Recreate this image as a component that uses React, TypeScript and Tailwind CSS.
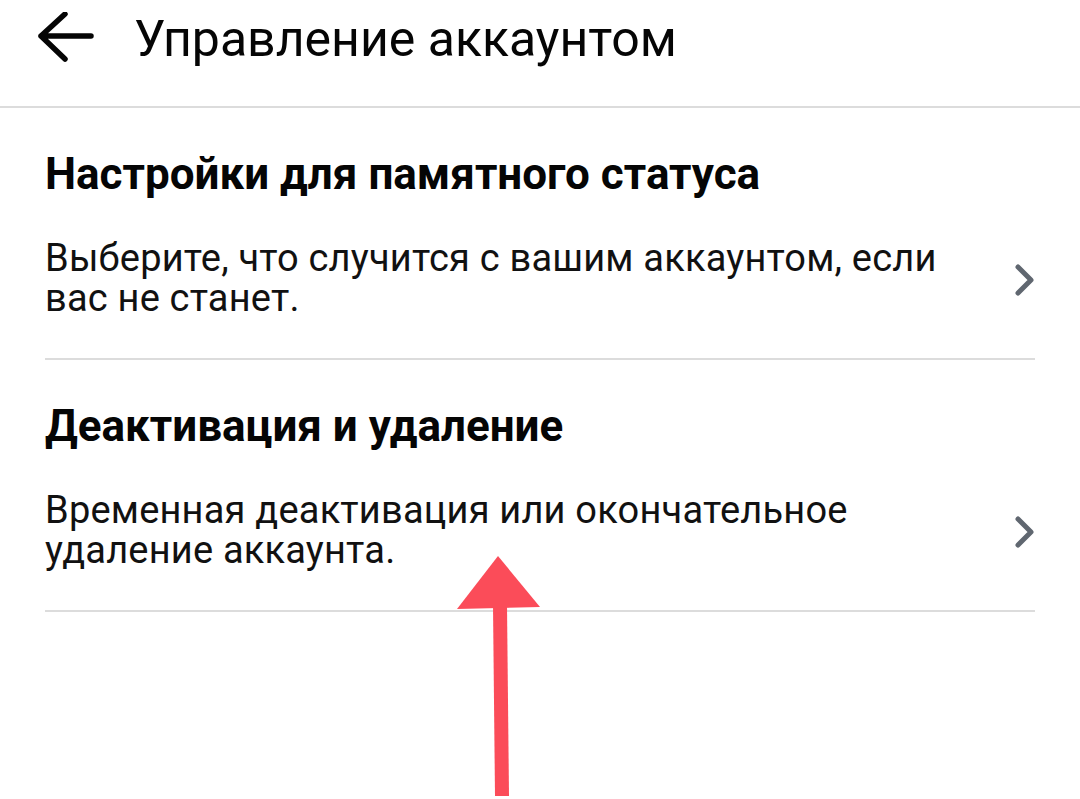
import React from "react";

type Item = {
  title: string;
  lines: string[];
};

const items: Item[] = [
  {
    title: "Настройки для памятного статуса",
    lines: ["Выберите, что случится с вашим аккаунтом, если", "вас не станет."],
  },
  {
    title: "Деактивация и удаление",
    lines: ["Временная деактивация или окончательное", "удаление аккаунта."],
  },
];

const BackArrow = () => (
  <svg width="60" height="54" viewBox="0 0 60 54" fill="none">
    <path
      d="M5 24 H55 M29 2 L5 24 L29 47"
      stroke="#050505"
      strokeWidth="5.5"
      strokeLinecap="round"
      strokeLinejoin="round"
    />
  </svg>
);

const Chevron = () => (
  <svg width="22" height="34" viewBox="0 0 22 34" fill="none">
    <path
      d="M4 4 L17 17 L4 30"
      stroke="#606770"
      strokeWidth="5"
      strokeLinecap="round"
      strokeLinejoin="round"
    />
  </svg>
);

// red pointer drawn over the list
const Pointer = () => (
  <svg
    className="absolute left-0 top-0 pointer-events-none"
    width="1080"
    height="799"
    viewBox="0 0 1080 799"
  >
    <polygon points="498,556 457,609 540,607" fill="#fb4c59" />
    <polygon points="493,605 507,605 509,796 495,796" fill="#fb4c59" />
  </svg>
);

const Row = ({ item }: { item: Item }) => (
  <div className="mx-[45px] border-b-2 border-[#dcdcdc] pt-[41px] pb-[40px]">
    <h2 className="text-[44px] leading-[50px] font-bold text-[#050505]">
      {item.title}
    </h2>
    <div className="mt-[39px] flex items-center justify-between">
      <p className="text-[38px] leading-[40px] tracking-[0.2px] text-[#111111]">
        {item.lines[0]}
        <br />
        {item.lines[1]}
      </p>
      <div className="mt-[4px] mr-[-1px]">
        <Chevron />
      </div>
    </div>
  </div>
);

export default function App() {
  return (
    <div
      className="relative w-[1080px] h-[799px] overflow-hidden bg-white"
      style={{ fontFamily: "Roboto, 'Noto Sans', sans-serif" }}
    >
      <header className="h-[108px] border-b-2 border-[#dcdcdc]">
        <div className="h-[78px] flex items-center">
          <div className="ml-[36px] w-[98px]">
            <BackArrow />
          </div>
          <h1 className="text-[50px] leading-[58px] text-[#050505]">
            Управление аккаунтом
          </h1>
        </div>
      </header>
      {items.map((item) => (
        <Row key={item.title} item={item} />
      ))}
      <Pointer />
    </div>
  );
}
